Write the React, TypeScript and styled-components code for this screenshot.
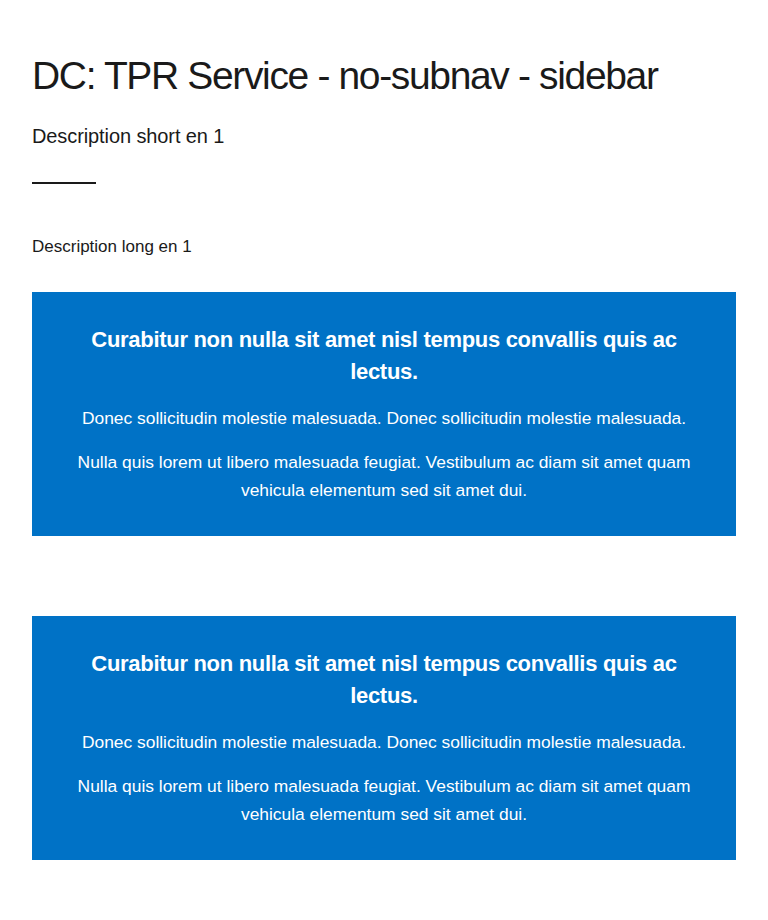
import React from 'react';
import styled, { createGlobalStyle } from 'styled-components';

const GlobalStyle = createGlobalStyle`
  html, body {
    margin: 0;
    padding: 0;
    background: #fff;
    font-family: "Liberation Sans", Arial, sans-serif;
    color: #1a1a1a;
  }
`;

const Page = styled.main`
  padding: 52px 32px 60px;
  display: flex;
  flex-direction: column;
`;

const Title = styled.h1`
  margin: 0;
  font-size: 39px;
  font-weight: 400;
  line-height: 48px;
  letter-spacing: -1.35px;
`;

const ShortDescription = styled.p`
  margin: 22px 0 0;
  font-size: 20px;
  line-height: 28px;
  letter-spacing: -0.1px;
`;

const Rule = styled.hr`
  margin: 32px 0 0;
  width: 64px;
  height: 2px;
  border: none;
  background: #1a1a1a;
`;

const LongDescription = styled.p`
  margin: 50px 0 0;
  font-size: 17px;
  line-height: 26px;
`;

const Panels = styled.div`
  margin-top: 32px;
  display: flex;
  flex-direction: column;
  gap: 80px;
`;

const Panel = styled.section`
  background: #0072c6;
  color: #fff;
  text-align: center;
  padding: 32px 44px 32px;
  height: 244px;
  box-sizing: border-box;
`;

const PanelTitle = styled.h2`
  margin: 0;
  font-size: 22px;
  font-weight: 700;
  line-height: 32px;
  letter-spacing: -0.3px;
`;

const PanelText = styled.p`
  margin: 16px 0 0;
  font-size: 17.4px;
  line-height: 28px;
`;

const panels = [1, 2];

export default function App() {
  return (
    <>
      <GlobalStyle />
      <Page>
        <Title>DC: TPR Service - no-subnav - sidebar</Title>
        <ShortDescription>Description short en 1</ShortDescription>
        <Rule />
        <LongDescription>Description long en 1</LongDescription>
        <Panels>
          {panels.map((id) => (
            <Panel key={id}>
              <PanelTitle>Curabitur non nulla sit amet nisl tempus convallis quis ac lectus.</PanelTitle>
              <PanelText>Donec sollicitudin molestie malesuada. Donec sollicitudin molestie malesuada.</PanelText>
              <PanelText>Nulla quis lorem ut libero malesuada feugiat. Vestibulum ac diam sit amet quam vehicula elementum sed sit amet dui.</PanelText>
            </Panel>
          ))}
        </Panels>
      </Page>
    </>
  );
}
